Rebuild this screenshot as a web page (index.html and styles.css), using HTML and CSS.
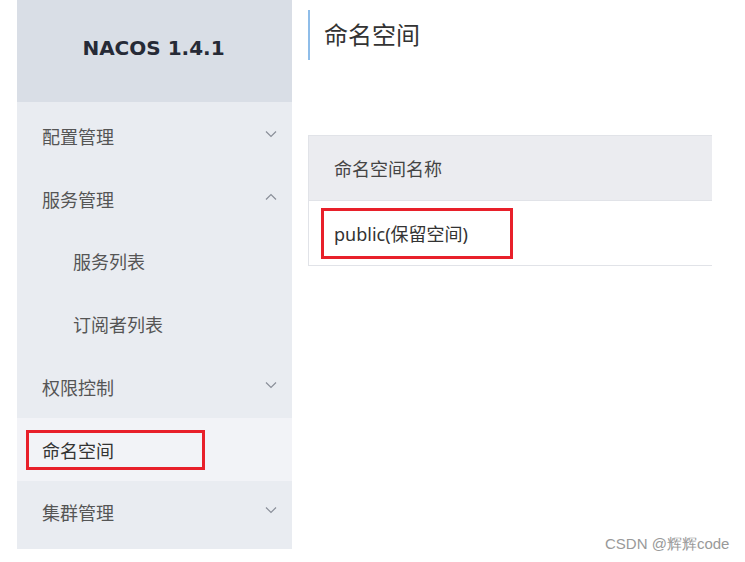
FILE: index.html
```html
<!DOCTYPE html>
<html>
<head>
  <title>Nacos 命名空间</title>
  <link rel="stylesheet" href="styles.css">
</head>
<body>
  <div class="layout">
    <aside class="sidebar">
      <div class="brand">NACOS 1.4.1</div>
      <ul class="menu">
        <li class="item">配置管理
          <svg class="arrow" width="12" height="8" viewBox="0 0 12 8"><path d="M1 1.5 6 6.5 11 1.5" fill="none" stroke="#8a8f99" stroke-width="1.2"/></svg>
        </li>
        <li class="item">服务管理
          <svg class="arrow" width="12" height="8" viewBox="0 0 12 8"><path d="M1 6.5 6 1.5 11 6.5" fill="none" stroke="#8a8f99" stroke-width="1.2"/></svg>
        </li>
        <li class="item sub">服务列表</li>
        <li class="item sub">订阅者列表</li>
        <li class="item">权限控制
          <svg class="arrow" width="12" height="8" viewBox="0 0 12 8"><path d="M1 1.5 6 6.5 11 1.5" fill="none" stroke="#8a8f99" stroke-width="1.2"/></svg>
        </li>
        <li class="item active"><span class="mark">命名空间</span></li>
        <li class="item">集群管理
          <svg class="arrow" width="12" height="8" viewBox="0 0 12 8"><path d="M1 1.5 6 6.5 11 1.5" fill="none" stroke="#8a8f99" stroke-width="1.2"/></svg>
        </li>
      </ul>
    </aside>

    <main class="content">
      <h1 class="title">命名空间</h1>
      <table class="ns-table">
        <thead>
          <tr><th>命名空间名称</th></tr>
        </thead>
        <tbody>
          <tr><td><span class="mark">public(保留空间)</span></td></tr>
        </tbody>
      </table>
    </main>
  </div>
  <div class="watermark">CSDN @辉辉code</div>
</body>
</html>
```

FILE: styles.css
```css
body {
  margin: 0;
  background: #fff;
  font-family: "Noto Sans", "Noto Sans CJK SC", sans-serif;
  color: #333;
}
.layout {
  display: flex;
  padding-left: 17px;
}
.sidebar {
  width: 275px;
  flex: none;
  background: #e9ecf1;
  padding-bottom: 6px;
}
.brand {
  height: 102px;
  background: #d9dee6;
  display: flex;
  align-items: center;
  justify-content: center;
  font-family: "DejaVu Sans", sans-serif;
  font-weight: bold;
  font-size: 20px;
  color: #262a36;
  padding-bottom: 7px;
  padding-right: 2px;
  box-sizing: border-box;
}
.menu {
  list-style: none;
  margin: 0;
  padding: 3px 0 0;
}
.item {
  height: 62.6px;
  display: flex;
  align-items: center;
  padding: 0 15px 0 25px;
  font-size: 18px;
  color: #555;
  position: relative;
}
.item.sub {
  padding-left: 56px;
}
.item.active {
  background: #f2f3f7;
  padding-left: 9px;
  color: #333;
}
.item.active .mark {
  margin-top: 2px;
  width: 179px;
  height: 40px;
  padding-left: 13px;
}
.arrow {
  margin-left: auto;
  margin-top: -4px;
}
.mark {
  display: inline-flex;
  align-items: center;
  box-sizing: border-box;
  border: 3px solid #e8202a;
}
.content {
  flex: 1;
  padding-left: 16px;
}
.title {
  margin: 10px 0 0;
  height: 50px;
  border-left: 2px solid #8fbde9;
  padding-left: 14px;
  font-size: 24px;
  font-weight: normal;
  line-height: 50px;
  color: #333;
}
.ns-table {
  margin-top: 75px;
  width: 404px;
  border-collapse: collapse;
  font-size: 18px;
}
.ns-table th {
  height: 64px;
  background: #ebecf0;
  border-top: 1px solid #e1e3e8;
  border-left: 1px solid #e1e3e8;
  text-align: left;
  font-weight: normal;
  padding: 0 0 0 25px;
  color: #444;
}
.ns-table td {
  height: 64px;
  border-top: 1px solid #e1e3e8;
  border-left: 1px solid #e1e3e8;
  border-bottom: 1px solid #e1e3e8;
  padding: 0 0 0 12px;
}
.ns-table td .mark {
  width: 192px;
  height: 51px;
  padding-left: 10px;
  color: #333;
}
.watermark {
  position: absolute;
  left: 605px;
  top: 535px;
  font-family: "Liberation Sans", sans-serif;
  font-size: 15px;
  color: #999;
}
```
